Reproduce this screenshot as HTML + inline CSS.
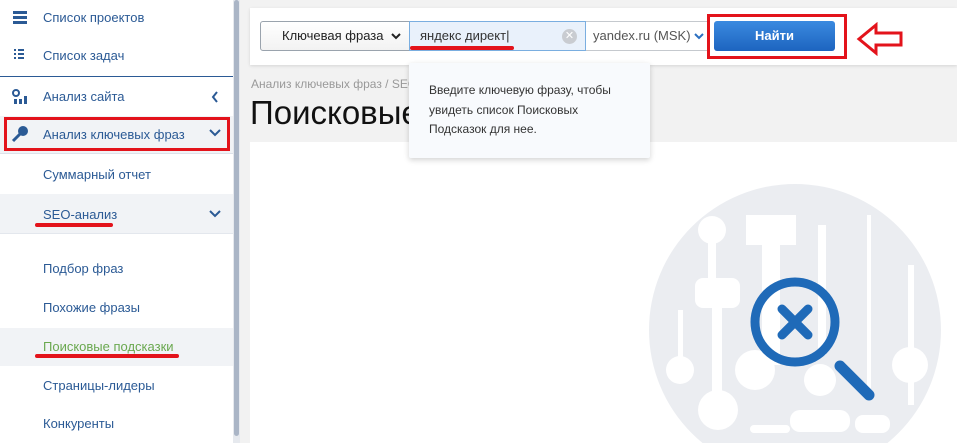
<!DOCTYPE html>
<html style="width:957px;height:443px;overflow:hidden"><head><meta charset="utf-8"><style>
*{margin:0;padding:0;box-sizing:border-box}
body{width:957px;height:443px;overflow:hidden;background:#f2f2f2;font-family:"Liberation Sans","Noto Sans CJK SC",sans-serif;position:relative}
.sb{position:absolute;left:0;top:0;width:233px;height:443px;background:#fff;overflow:hidden}
.scr{position:absolute;left:233px;top:0;width:7px;height:443px;background:#e6e9ee}
.scr i{position:absolute;left:1px;top:0;width:5px;height:436px;background:#aab5c6;border-radius:3px}
.it{position:absolute;left:0;width:233px;height:39px;font-size:13px;color:#2b5a95;line-height:39px}
.it span{position:absolute;left:43px}
.hl{background:#f1f3f6}
.t{position:absolute}
</style></head><body>
<div class="sb">
 <div class="it" style="top:-2px"><span>Список проектов</span></div>
 <div class="t" style="left:13px;top:11px;width:14px;height:3px;background:#2b5a95;box-shadow:0 5px 0 #2b5a95,0 10px 0 #2b5a95"></div>
 <div class="it" style="top:36px"><span>Список задач</span></div>
 <div class="t" style="left:14px;top:49px;width:2px;height:2px;background:#2b5a95;box-shadow:0 4px 0 #2b5a95,0 8px 0 #2b5a95,4px 0 0 #2b5a95,6px 0 0 #2b5a95,8px 0 0 #2b5a95,4px 4px 0 #2b5a95,6px 4px 0 #2b5a95,8px 4px 0 #2b5a95,4px 8px 0 #2b5a95,6px 8px 0 #2b5a95,8px 8px 0 #2b5a95"></div>
 <div class="t" style="left:0;top:76px;width:233px;height:1px;background:#2b5a95"></div>
 <div class="it" style="top:77px"><span>Анализ сайта</span></div>
 <svg class="t" style="left:211px;top:91px" width="8" height="12"><path d="M6 1L2 6l4 5" fill="none" stroke="#2b5a95" stroke-width="2"/></svg>
 <svg class="t" style="left:11px;top:89px" width="16" height="16"><circle cx="5" cy="4" r="3" fill="none" stroke="#2b5a95" stroke-width="2"/><rect x="3" y="10" width="3" height="5" fill="#2b5a95"/><rect x="8" y="10" width="3" height="5" fill="#2b5a95"/><rect x="13" y="7" width="3" height="8" fill="#2b5a95"/></svg>
 <div class="it hl" style="top:116px;height:38px;border-bottom:1px solid #dde2ea"></div>
 <div class="t" style="left:4px;top:117px;width:226px;height:34px;border:3px solid #e3131b"></div>
 <div class="it" style="top:115px"><span>Анализ ключевых фраз</span></div>
 <svg class="t" style="left:209px;top:129px" width="12" height="8"><path d="M1 1l5 5 5-5" fill="none" stroke="#2b5a95" stroke-width="2"/></svg>
 <svg class="t" style="left:11px;top:125px" width="18" height="18"><circle cx="12" cy="6" r="5" fill="#2b5a95"/><path d="M9 9L2 16" stroke="#2b5a95" stroke-width="3"/></svg>
 <div class="it" style="top:155px"><span>Суммарный отчет</span></div>
 <div class="it hl" style="top:194px;height:40px;border-bottom:1px solid #e3e7ed"></div>
 <div class="it" style="top:195px"><span>SEO-анализ</span></div>
 <svg class="t" style="left:209px;top:210px" width="12" height="8"><path d="M1 1l5 5 5-5" fill="none" stroke="#2b5a95" stroke-width="2"/></svg>
 <div class="t" style="left:35px;top:223px;width:78px;height:4px;background:#e3131b;border-radius:2px"></div>
 <div class="it" style="top:249px"><span>Подбор фраз</span></div>
 <div class="it" style="top:288px"><span>Похожие фразы</span></div>
 <div class="it hl" style="top:328px;height:38px"></div>
 <div class="it" style="top:327px;color:#6aa84f"><span>Поисковые подсказки</span></div>
 <div class="t" style="left:35px;top:354px;width:144px;height:4px;background:#e3131b;border-radius:2px"></div>
 <div class="it" style="top:366px"><span>Страницы-лидеры</span></div>
 <div class="it" style="top:404px"><span>Конкуренты</span></div>
</div>
<div class="scr"><i></i></div>

<div class="t" style="left:250px;top:8px;width:707px;height:57px;background:#fff;box-shadow:0 1px 3px rgba(0,0,0,.12)"></div>
<div class="t" style="left:260px;top:21px;width:150px;height:30px;border:1px solid #9aa3ad;border-radius:3px 0 0 3px;background:linear-gradient(#fff,#f2f2f2);font-size:13px;color:#222;line-height:28px;padding-left:21px">Ключевая фраза<svg style="position:absolute;left:130px;top:11px" width="10" height="7"><path d="M1 1l4 4 4-4" fill="none" stroke="#222" stroke-width="2"/></svg></div>
<div class="t" style="left:409px;top:21px;width:177px;height:30px;border:1px solid #7aaee0;background:#e9f1fb;font-size:13px;color:#333;line-height:28px;padding-left:10px">яндекс директ|<div style="position:absolute;right:8px;top:7px;width:15px;height:15px;border-radius:50%;background:#c9ccd1;color:#fff;font-size:11px;line-height:15px;text-align:center">✕</div></div>
<div class="t" style="left:410px;top:46px;width:104px;height:4px;background:#e3131b;border-radius:2px"></div>
<div class="t" style="left:586px;top:21px;width:122px;height:30px;border:1px solid #c5c9ce;border-left:none;background:#fff;font-size:13px;color:#555;line-height:28px;padding-left:7px">yandex.ru (MSK)<svg style="position:absolute;left:108px;top:11px" width="10" height="7"><path d="M1 1l4 4 4-4" fill="none" stroke="#2b6fc0" stroke-width="2"/></svg></div>
<div class="t" style="left:707px;top:14px;width:140px;height:45px;border:3px solid #e3131b"></div>
<div class="t" style="left:714px;top:21px;width:121px;height:30px;background:linear-gradient(#3a8ae0,#1d64bf);border-radius:3px;color:#fff;font-weight:bold;font-size:13px;line-height:30px;text-align:center">Найти</div>
<svg class="t" style="left:856px;top:22px" width="52" height="34"><path d="M3 17L20 3v8h25v12H20v8z" fill="#fff" stroke="#e3131b" stroke-width="3" stroke-linejoin="miter"/></svg>

<div class="t" style="left:251px;top:77px;font-size:12px;color:#999">Анализ ключевых фраз / SEO</div>
<div class="t" style="left:250px;top:94px;font-size:33px;color:#111">Поисковые</div>
<div class="t" style="left:250px;top:142px;width:707px;height:301px;background:#fff"></div>
<div class="t" style="left:409px;top:63px;width:241px;height:95px;background:#f8fafd;box-shadow:0 2px 6px rgba(0,0,0,.18);border-radius:2px;font-size:12px;color:#333;line-height:19.5px;padding:18px 0 0 20px">Введите ключевую фразу, чтобы<br>увидеть список Поисковых<br>Подсказок для нее.</div>

<svg class="t" style="left:640px;top:170px" width="317" height="273">
 <circle cx="155" cy="160" r="146" fill="#ebedf1"/>
 <g fill="#fff">
  <circle cx="72" cy="60" r="14"/><rect x="68" y="60" width="8" height="50"/>
  <rect x="106" y="45" width="50" height="30"/><rect x="122" y="75" width="18" height="120"/>
  <rect x="178" y="55" width="8" height="130"/>
  <rect x="227" y="45" width="4" height="180"/>
  <rect x="268" y="95" width="6" height="140"/><circle cx="270" cy="195" r="18"/>
  <rect x="55" y="108" width="45" height="30" rx="8"/><rect x="72" y="130" width="10" height="110"/>
  <circle cx="40" cy="200" r="14"/><rect x="38" y="140" width="5" height="50"/>
  <circle cx="115" cy="200" r="20"/><circle cx="78" cy="240" r="20"/>
  <circle cx="180" cy="210" r="16"/>
  <rect x="150" y="240" width="60" height="22" rx="10"/>
  <rect x="110" y="255" width="40" height="8" rx="4"/>
  <rect x="215" y="245" width="35" height="18" rx="8"/>
 </g>
 <circle cx="155" cy="152" r="40" fill="none" stroke="#1f6ab8" stroke-width="9"/>
 <path d="M142 139l26 26M168 139l-26 26" stroke="#1f6ab8" stroke-width="9" stroke-linecap="round"/>
 <path d="M200 196l29 29" stroke="#1f6ab8" stroke-width="11" stroke-linecap="round"/>
</svg>
</body></html>
